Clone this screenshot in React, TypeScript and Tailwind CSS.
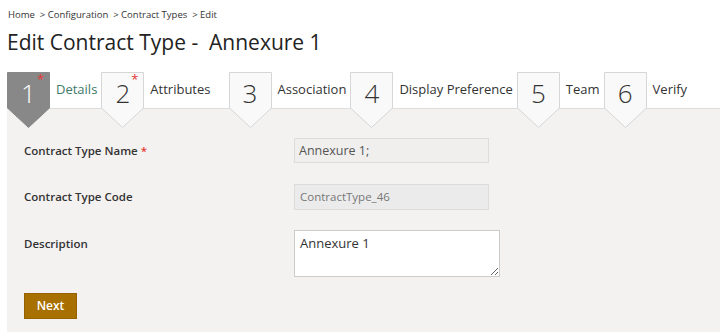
import React from 'react';

const steps = [
  { n: 1, label: "Details", required: true, active: true },
  { n: 2, label: "Attributes", required: true, extra: true },
  { n: 3, label: "Association" },
  { n: 4, label: "Display Preference" },
  { n: 5, label: "Team" },
  { n: 6, label: "Verify" },
];

const StepTab: React.FC<{ step: typeof steps[0] }> = ({ step }) => (
  <div className={`flex items-start ${step.extra ? 'mr-[18px]' : 'mr-[4px]'}`}>
    <div className="relative w-[43px] h-[36px] shrink-0">
      {/* pointed tab shape hangs over the panel */}
      <svg className="absolute left-0 top-0 z-10" width="43" height="56" viewBox="0 0 43 56">
        <polygon
          points="0.5,0.5 42.5,0.5 42.5,36 21.5,55.5 0.5,36"
          fill={step.active ? '#888888' : '#f9f9f9'}
          stroke={step.active ? '#888888' : '#d6d6d6'}
          strokeWidth="1"
        />
      </svg>
      <span
        className={`absolute left-0 top-[3px] z-20 w-[43px] text-center text-[26px] font-light leading-[36px] ${
          step.active ? 'text-white' : 'text-[#333]'
        }`}
      >
        {step.n}
      </span>
      {step.required && (
        <span className="absolute left-[30px] top-[1px] z-20 text-[13px] leading-none text-[#e53935]">*</span>
      )}
    </div>
    <span
      className={`ml-[6px] mt-[8px] text-[13px] leading-[18px] whitespace-nowrap ${
        step.active ? 'text-[#3d7a69]' : 'text-[#333]'
      }`}
    >
      {step.label}
    </span>
  </div>
);

const App: React.FC = () => {
  return (
    <div className="w-[720px] h-[332px] bg-white overflow-hidden font-['Open_Sans',sans-serif] text-[#333]">
      <div className="pl-[8px] pt-[8px] text-[9.5px] leading-[14px] text-[#333]">
        Home &nbsp;&gt; Configuration &nbsp;&gt; Contract Types &nbsp;&gt; Edit
      </div>
      <h1 className="pl-[7px] mt-[6px] text-[21px] leading-[29px] text-[#222] whitespace-pre">
        Edit Contract Type -  Annexure 1
      </h1>

      <div className="flex items-start pl-[7px] mt-[15px] h-[36px] relative z-10">
        {steps.map((s) => (
          <StepTab key={s.n} step={s} />
        ))}
      </div>

      <div className="ml-[7px] h-[224px] bg-[#f3f2f1] border-t border-[#dddddd] pl-[17px] pt-[29px]">
        <div className="flex items-start">
          <label className="w-[270px] pt-[4px] text-[11.5px] leading-[17px] font-semibold text-[#333]">
            Contract Type Name <span className="text-[#e53935]">*</span>
          </label>
          <div className="w-[195px] h-[25px] bg-[#f0efee] border border-[#dcdcdc] px-[4px] text-[12.5px] leading-[23px] text-[#555]">
            Annexure 1;
          </div>
        </div>

        <div className="flex items-start mt-[21px]">
          <label className="w-[270px] pt-[4px] text-[11.5px] leading-[17px] font-semibold text-[#333]">
            Contract Type Code
          </label>
          <div className="w-[195px] h-[26px] bg-[#ebebeb] border border-[#dcdcdc] px-[5px] text-[11.5px] leading-[24px] text-[#777]">
            ContractType_46
          </div>
        </div>

        <div className="flex items-start mt-[20px]">
          <label className="w-[270px] pt-[5px] text-[11.5px] leading-[17px] font-semibold text-[#333]">
            Description
          </label>
          <textarea
            readOnly
            defaultValue="Annexure 1"
            className="w-[206px] h-[47px] bg-white border border-[#cccccc] px-[5px] py-[3px] text-[13px] leading-[18px] text-[#333] outline-none"
          />
        </div>

        <button className="mt-[16px] w-[53px] h-[26px] bg-[#a87000] border border-[#946200] text-white text-[12px] font-semibold leading-[24px] text-center">
          Next
        </button>
      </div>
    </div>
  );
};

export default App;
